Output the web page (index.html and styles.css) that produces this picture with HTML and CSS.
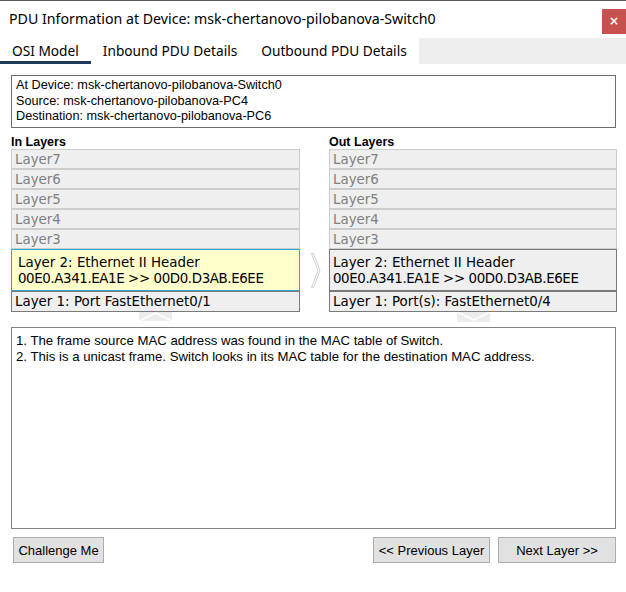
FILE: index.html
```html
<!DOCTYPE html>
<html>
<head>
<meta charset="utf-8">
<link rel="stylesheet" href="styles.css">
</head>
<body>
<div class="window">
  <div class="titlebar">
    <span class="title">PDU Information at Device: msk-chertanovo-pilobanova-Switch0</span>
    <span class="close">×</span>
  </div>
  <div class="tabs">
    <span class="tab active">OSI Model</span>
    <span class="tab">Inbound PDU Details</span>
    <span class="tab">Outbound PDU Details</span>
    <span class="tabfill"></span>
  </div>
  <div class="content">
    <div class="info">
      <div>At Device: msk-chertanovo-pilobanova-Switch0</div>
      <div>Source: msk-chertanovo-pilobanova-PC4</div>
      <div>Destination: msk-chertanovo-pilobanova-PC6</div>
    </div>
    <div class="layers">
      <div class="col">
        <div class="colhead">In Layers</div>
        <div class="layer dim">Layer7</div>
        <div class="layer dim">Layer6</div>
        <div class="layer dim">Layer5</div>
        <div class="layer dim">Layer4</div>
        <div class="layer dim">Layer3</div>
        <div class="layer big sel">Layer 2: Ethernet II Header<br><span class="mac">00E0.A341.EA1E &gt;&gt; 00D0.D3AB.E6EE</span></div>
        <div class="layer l1">Layer 1: Port FastEthernet0/1</div>
        <div class="chev">
          <svg width="33" height="9" viewBox="0 0 33 9"><rect width="33" height="9" fill="#ececec"/><polyline points="0,9 16.5,1 33,9" fill="none" stroke="#fff" stroke-width="1.5"/></svg>
        </div>
      </div>
      <div class="mid">
        <svg width="10" height="35" viewBox="0 0 10 35"><polygon points="0.5,0.5 2.5,0.5 9,17.5 2.5,34.5 0.5,34.5 7,17.5" fill="#fff" stroke="#cfcfcf" stroke-width="1"/></svg>
      </div>
      <div class="col">
        <div class="colhead">Out Layers</div>
        <div class="layer dim">Layer7</div>
        <div class="layer dim">Layer6</div>
        <div class="layer dim">Layer5</div>
        <div class="layer dim">Layer4</div>
        <div class="layer dim">Layer3</div>
        <div class="layer big out">Layer 2: Ethernet II Header<br><span class="mac">00E0.A341.EA1E &gt;&gt; 00D0.D3AB.E6EE</span></div>
        <div class="layer l1">Layer 1: Port(s): FastEthernet0/4</div>
        <div class="chev">
          <svg width="33" height="10" viewBox="0 0 33 10"><rect width="33" height="10" fill="#ececec"/><polyline points="0,0 16.5,8 33,0" fill="none" stroke="#fff" stroke-width="1.5"/></svg>
        </div>
      </div>
    </div>
    <div class="desc">
      <div>1. The frame source MAC address was found in the MAC table of Switch.</div>
      <div>2. This is a unicast frame. Switch looks in its MAC table for the destination MAC address.</div>
    </div>
    <div class="buttons">
      <button class="btn challenge">Challenge Me</button>
      <span class="spacer"></span>
      <button class="btn prev">&lt;&lt; Previous Layer</button>
      <button class="btn next">Next Layer &gt;&gt;</button>
    </div>
  </div>
</div>
</body>
</html>
```

FILE: styles.css
```css
html, body {
  margin: 0;
  padding: 0;
  background: #ffffff;
}
.window {
  width: 626px;
  height: 592px;
  border-top: 1px solid #5a5a5a;
  box-sizing: border-box;
  background: #fff;
}
.titlebar {
  height: 37px;
  display: flex;
  align-items: flex-start;
  justify-content: space-between;
}
.title {
  font-family: "Noto Sans", sans-serif;
  font-size: 14.2px;
  color: #000;
  margin-left: 9px;
  margin-top: 8px;
  line-height: 20px;
}
.close {
  width: 24px;
  height: 25px;
  margin-top: 8px;
  background: #c75050;
  color: #fff;
  font-family: "DejaVu Sans", sans-serif;
  font-weight: bold;
  font-size: 12px;
  line-height: 25px;
  text-align: center;
}
.tabs {
  display: flex;
  height: 26px;
}
.tab {
  font-family: "Noto Sans", sans-serif;
  font-size: 13.7px;
  line-height: 26px;
  padding: 0 12px;
  color: #000;
  box-sizing: border-box;
  height: 26px;
}
.tab.active {
  border-bottom: 3px solid #1c3a58;
}
.tabfill {
  flex: 1;
  background: #eeeeee;
}
.content {
  padding: 11px 10px 0 11px;
}
.info {
  border: 1px solid #6d6d6d;
  height: 53px;
  box-sizing: border-box;
  padding: 2px 4px 0 4px;
  font-family: "Liberation Sans", Arial, sans-serif;
  font-size: 12.7px;
  line-height: 15.5px;
  color: #000;
}
.layers {
  display: grid;
  grid-template-columns: 289px 29px 288px;
  margin-top: 7px;
}
.colhead {
  font-family: "Liberation Sans", Arial, sans-serif;
  font-weight: bold;
  font-size: 12.5px;
  line-height: 14px;
  color: #000;
}
.layer {
  font-family: "DejaVu Sans", Verdana, sans-serif;
  font-size: 13.4px;
  box-sizing: border-box;
  height: 20px;
  line-height: 19px;
  padding: 0 3px;
  background: #efefef;
  border: 1px solid #cdcdcd;
  color: #000;
}
.layer.dim {
  color: #808080;
}
.layer.big {
  height: 42px;
  padding: 5px 6px 0 6px;
  line-height: 16px;
}
.mac {
  letter-spacing: -0.4px;
}
.layer.sel {
  background: #ffffcc;
  border: 1px solid #27a6dc;
}
.layer.out {
  border: 1px solid #7a7a7a;
  padding-left: 3px;
}
.layer.l1 {
  border: 1px solid #7a7a7a;
  height: 21px;
  line-height: 19px;
}
.chev {
  display: flex;
  justify-content: center;
  height: 9px;
}
.chev svg {
  display: block;
}
.mid {
  padding-top: 118px;
  padding-left: 11px;
}
.mid svg {
  display: block;
}
.desc {
  margin-top: 6px;
  border: 1px solid #828282;
  height: 202px;
  box-sizing: border-box;
  padding: 5px 4px;
  font-family: "Liberation Sans", Arial, sans-serif;
  font-size: 13.2px;
  line-height: 16px;
  color: #000;
}
.buttons {
  display: flex;
  margin-top: 8px;
  padding-left: 2px;
  gap: 8px;
}
.spacer {
  flex: 1;
}
.btn {
  font-family: "Liberation Sans", Arial, sans-serif;
  font-size: 13px;
  background: #e1e1e1;
  border: 1px solid #adadad;
  height: 26px;
  padding: 0;
  margin: 0;
  color: #000;
}
.challenge { width: 91px; }
.prev { width: 117px; }
.next { width: 118px; }
```
